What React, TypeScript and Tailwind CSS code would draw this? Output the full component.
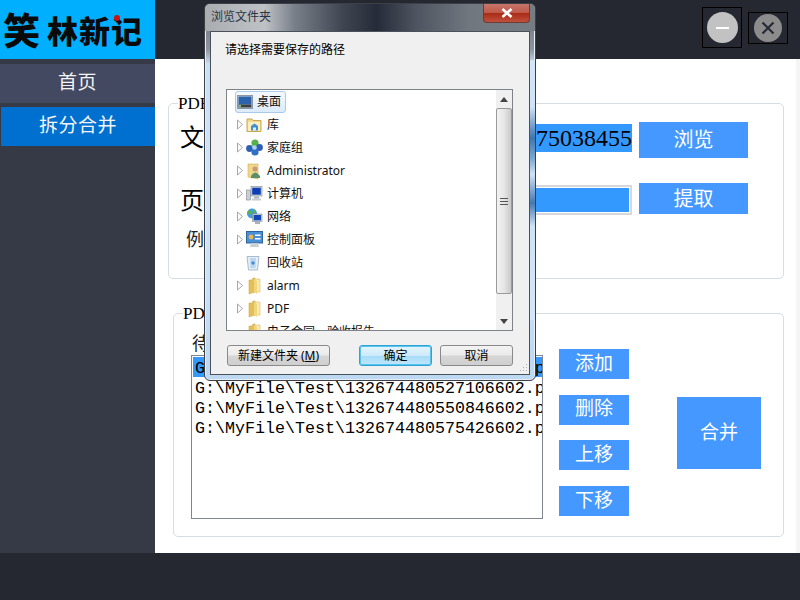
import React from "react";

const SERIF = "font-['Liberation_Serif','Noto_Sans_CJK_SC',serif]";
const UI = "font-['Noto_Sans','Noto_Sans_CJK_SC',sans-serif]";

function Tri() {
  return (
    <svg width="8" height="11" viewBox="0 0 8 11" className="shrink-0">
      <path d="M1.5 1 L6.5 5.5 L1.5 10 Z" fill="#fff" stroke="#a6a6a6" />
    </svg>
  );
}

function Folder() {
  return (
    <svg width="16" height="18" viewBox="0 0 16 18">
      <path d="M3 3 H6 L7 1 H9 V15 L3 17 Z" fill="#e3bf58" stroke="#cfae55" strokeWidth="0.6" />
      <path d="M9 2 H14 V15 H9 Z" fill="#f9eab0" stroke="#d9bd6a" strokeWidth="0.6" />
      <path d="M8 2 L11 4 V17 L8 15 Z" fill="#f2d67c" />
    </svg>
  );
}

function Icon({ kind }: { kind: string }) {
  if (kind === "desk")
    return (
      <svg width="16" height="14" viewBox="0 0 16 14">
        <rect x="0.5" y="0.5" width="15" height="13" fill="#cfd6de" stroke="#8d97a3" />
        <rect x="1.5" y="1.5" width="13" height="8" fill="#2a62ad" />
        <rect x="1.5" y="9.5" width="13" height="3" fill="#3a3f46" />
        <rect x="2" y="10" width="2" height="2" fill="#7fc06a" />
      </svg>
    );
  if (kind === "lib")
    return (
      <svg width="17" height="16" viewBox="0 0 17 16">
        <path d="M1 2 H6 L7 3.5 H15 V14.5 H1 Z" fill="#f3d98c" stroke="#c9a953" />
        <path d="M2 5 H14 V14 H2 Z" fill="#fbeebc" />
        <path d="M5 9 L8.5 6.5 L12 9 V13.5 H5 Z" fill="#3f8fd2" />
        <rect x="7" y="10.5" width="3" height="3" fill="#dff0fb" />
      </svg>
    );
  if (kind === "home")
    return (
      <svg width="17" height="17" viewBox="0 0 17 17">
        <circle cx="9" cy="4" r="3.6" fill="#57b04a" />
        <circle cx="3.5" cy="9.5" r="3.4" fill="#2f5fb4" />
        <circle cx="13.5" cy="8.5" r="3.4" fill="#2f5fb4" />
        <circle cx="9" cy="13" r="3.6" fill="#2f6fc4" />
        <circle cx="8.5" cy="8.5" r="2.2" fill="#a9d4f0" />
      </svg>
    );
  if (kind === "user")
    return (
      <svg width="16" height="18" viewBox="0 0 16 18">
        <path d="M2 2 H12 V17 L2 15 Z" fill="#f0d88a" stroke="#cfae55" strokeWidth="0.6" />
        <circle cx="9" cy="7" r="2.5" fill="#c99a76" />
        <path d="M5 14 Q9 7 14 14 V16 H5 Z" fill="#5d8f68" />
      </svg>
    );
  if (kind === "pc")
    return (
      <svg width="17" height="16" viewBox="0 0 17 16">
        <rect x="0.5" y="4" width="4" height="10" fill="#c9cfd6" stroke="#7d8791" strokeWidth="0.6" />
        <rect x="5" y="0.5" width="11" height="9.5" fill="#d5dae0" stroke="#7d8791" strokeWidth="0.6" />
        <rect x="6.2" y="1.7" width="8.6" height="7" fill="#0f3fb5" />
        <rect x="8" y="10.5" width="5" height="2" fill="#aab2bb" />
        <rect x="6" y="12.5" width="9" height="2" fill="#c5cbd2" />
      </svg>
    );
  if (kind === "net")
    return (
      <svg width="17" height="17" viewBox="0 0 17 17">
        <circle cx="6" cy="5.5" r="5" fill="#3f9fd8" />
        <path d="M3 2 Q6 3 5 6 Q2 7 1.5 4 Z M7 1 L10 3 L8 6 Z" fill="#5db04c" />
        <rect x="6.5" y="6" width="9.5" height="7.5" fill="#d5dae0" stroke="#7d8791" strokeWidth="0.6" />
        <rect x="7.6" y="7" width="7.4" height="5.4" fill="#1247b8" />
        <rect x="9" y="14" width="5" height="2" fill="#aab2bb" />
      </svg>
    );
  if (kind === "ctl")
    return (
      <svg width="17" height="17" viewBox="0 0 17 17">
        <rect x="0.5" y="0.5" width="16" height="11.5" fill="#4b8fd6" stroke="#2f659f" />
        <circle cx="5" cy="6" r="2.4" fill="#f1b64a" />
        <rect x="9" y="3.5" width="5.5" height="1.5" fill="#fff" />
        <rect x="9" y="7" width="5.5" height="1.5" fill="#fff" />
        <path d="M5 12 H12 L13 16 H4 Z" fill="#c9cfd6" />
      </svg>
    );
  if (kind === "bin")
    return (
      <svg width="14" height="16" viewBox="0 0 14 16">
        <path d="M1 1.5 H13 L11.5 15 H2.5 Z" fill="#e4eef7" stroke="#a9bccd" />
        <path d="M4 3 H10 L9.5 13 H4.5 Z" fill="#bcd6ee" />
        <circle cx="7" cy="8" r="1.8" fill="#4b8fd6" />
      </svg>
    );
  return <Folder />;
}

const rows: [string, string, boolean][] = [
  ["lib", "库", true],
  ["home", "家庭组", true],
  ["user", "Administrator", true],
  ["pc", "计算机", true],
  ["net", "网络", true],
  ["ctl", "控制面板", true],
  ["bin", "回收站", false],
  ["folder", "alarm", true],
  ["folder", "PDF", true],
  ["folder", "电子合同、验收报告", false],
];

function TreeRow({ kind, label, tri }: { kind: string; label: string; tri: boolean }) {
  return (
    <div className="flex h-[23px] shrink-0 items-center pl-[9px]">
      <div className="w-[10px] shrink-0">{tri && <Tri />}</div>
      <div className="flex w-[21px] shrink-0 justify-start">
        <Icon kind={kind} />
      </div>
      <span className="whitespace-nowrap text-[12px] text-[#111]">{label}</span>
    </div>
  );
}

function DlgBtn({ label, w, primary }: { label: React.ReactNode; w: string; primary?: boolean }) {
  return (
    <div
      className={`flex h-[21px] items-center justify-center rounded-[3px] border text-[12px] text-black ${w} ${
        primary
          ? "border-[#2ba4d8] bg-[linear-gradient(180deg,#e6f5fd_0%,#cdeafb_50%,#a9dcf8_55%,#bfe6fb_100%)] shadow-[inset_0_0_0_1px_#58c4ee]"
          : "border-[#8a8a8a] bg-[linear-gradient(180deg,#f3f3f3_0%,#ebebeb_48%,#d6d6d6_52%,#cfcfcf_100%)]"
      }`}
    >
      {label}
    </div>
  );
}

function Dialog() {
  return (
    <div
      className={`${UI} absolute left-[204px] top-[3px] flex h-[378px] w-[332px] flex-col overflow-hidden rounded-[6px] border border-[#3c4046] bg-[linear-gradient(180deg,#6c727c_0%,#8d949e_12%,#c9dff4_16%,#d3e6f8_55%,#bcd8f3_100%)] shadow-[inset_0_0_0_1px_#e8eef4]`}
    >
      <div className="flex h-[27px] shrink-0 items-start justify-between bg-[linear-gradient(90deg,#a9adb1_0%,#bfc2c5_18%,#7a808a_27%,#3f4550_42%,#252b38_52%,#4e5560_64%,#71777f_80%,#767c84_100%)] pl-[6px] pr-[5px]">
        <span className="pt-[5px] text-[12px] leading-[16px] text-[#2c3340]">浏览文件夹</span>
        <div className="flex h-[19px] w-[47px] items-center justify-center rounded-b-[4px] border border-t-0 border-[#6d3a36] bg-[linear-gradient(180deg,#c9746a_0%,#bf5a4b_48%,#a92c16_52%,#c0503c_100%)]">
          <svg width="14" height="10" viewBox="0 0 14 10">
            <path d="M2.5 1 L11.5 9 M11.5 1 L2.5 9" stroke="#fff" strokeWidth="2.6" />
          </svg>
        </div>
      </div>
      <div className="relative mx-[5px] mb-[5px] flex flex-1 flex-col border border-[#4b5159] bg-[#f0f0f0] pl-[15px] pr-[16px]">
        <div className="-ml-[1px] h-[57px] shrink-0 pt-[9px] text-[12px] leading-[18px] text-black">请选择需要保存的路径</div>
        <div className="flex h-[242px] shrink-0 border border-[#7f8388] bg-white">
          <div className="flex flex-1 flex-col overflow-hidden">
            <div className="flex h-[23px] shrink-0 items-center pl-[8px] pt-[1px]">
              <div className="flex h-[22px] w-[51px] items-center gap-[4px] rounded-[3px] border border-[#a9c9ee] bg-[linear-gradient(180deg,#f4f9fe_0%,#dcebfb_100%)] pl-[1px]">
                <Icon kind="desk" />
                <span className="text-[12px] text-[#111]">桌面</span>
              </div>
            </div>
            {rows.map((r) => (
              <TreeRow key={r[1]} kind={r[0]} label={r[1]} tri={r[2]} />
            ))}
          </div>
          <div className="flex w-[16px] shrink-0 flex-col bg-[#f0f0f0]">
            <div className="flex h-[18px] shrink-0 items-center justify-center">
              <svg width="8" height="5" viewBox="0 0 8 5">
                <path d="M4 0 L8 5 H0 Z" fill="#444" />
              </svg>
            </div>
            <div className="flex h-[186px] shrink-0 items-center justify-center rounded-[2px] border border-[#9a9a9a] bg-[linear-gradient(90deg,#f2f2f2_0%,#e6e6e6_50%,#c9c9c9_100%)]">
              <svg width="8" height="7" viewBox="0 0 8 7">
                <path d="M0 .5 H8 M0 3.5 H8 M0 6.5 H8" stroke="#555" />
              </svg>
            </div>
            <div className="flex-1" />
            <div className="flex h-[18px] shrink-0 items-center justify-center">
              <svg width="8" height="5" viewBox="0 0 8 5">
                <path d="M4 5 L8 0 H0 Z" fill="#444" />
              </svg>
            </div>
          </div>
        </div>
        <div className="mt-[14px] flex">
          <div className="ml-[1px]">
            <DlgBtn
              label={
                <span>
                  新建文件夹 (<u>M</u>)
                </span>
              }
              w="w-[103px]"
            />
          </div>
          <div className="ml-[29px]">
            <DlgBtn label="确定" w="w-[73px]" primary />
          </div>
          <div className="ml-[8px]">
            <DlgBtn label="取消" w="w-[73px]" />
          </div>
        </div>
        <svg width="10" height="10" viewBox="0 0 10 10" className="absolute bottom-[1px] right-[1px]">
          <path d="M8 1h1v1H8zM5 4h1v1H5zM8 4h1v1H8zM2 7h1v1H2zM5 7h1v1H5zM8 7h1v1H8z" fill="#b0b0b0" />
        </svg>
      </div>
      <div className="absolute right-0 top-[56px] h-[260px] w-[5px] bg-[linear-gradient(180deg,#d3e6f8_0%,#cfe3f6_18%,#3f75ad_30%,#7ea9d4_38%,#cfe3f6_44%,#4478b0_55%,#cfe3f6_64%,#d3e6f8_100%)]" />
    </div>
  );
}

function Btn({ label, cls }: { label: string; cls: string }) {
  return (
    <div className={`flex shrink-0 items-center justify-center bg-[#4498ff] text-white ${cls}`}>{label}</div>
  );
}

const files = [
  "G:\\MyFile\\Test\\132674480503066602.pdf",
  "G:\\MyFile\\Test\\132674480527106602.pdf",
  "G:\\MyFile\\Test\\132674480550846602.pdf",
  "G:\\MyFile\\Test\\132674480575426602.pdf",
];

export default function App() {
  return (
    <div className={`${SERIF} relative flex h-[600px] w-[800px] flex-col overflow-hidden bg-[#252830]`}>
      <header className="flex h-[59px] shrink-0">
        <div className="relative flex w-[155px] items-center bg-[#00b0ff] pl-[3px] font-['Noto_Sans_CJK_SC',sans-serif] font-black text-[#0a0a0a]">
          <span className="text-[37px] leading-none">笑</span>
          <span className="ml-[7px] text-[31px] leading-none tracking-[1px]">林新记</span>
          <span className="absolute left-[114px] top-[15px] h-[6px] w-[6px] rounded-full bg-[#d01010]" />
        </div>
        <div className="flex flex-1 items-start justify-end pr-[12px]">
          <div className="mt-[7px] flex h-[41px] w-[40px] items-center justify-center border border-black">
            <div className="flex h-[31px] w-[31px] items-center justify-center rounded-full bg-[#c2c2c2]">
              <div className="h-[2px] w-[13px] bg-white" />
            </div>
          </div>
          <div className="ml-[6px] mt-[12px] flex h-[32px] w-[40px] items-center justify-center border border-black">
            <div className="flex h-[28px] w-[28px] items-center justify-center rounded-full bg-[#8c8c8c]">
              <svg width="14" height="14" viewBox="0 0 14 14">
                <path d="M1.5 1.5 L12.5 12.5 M12.5 1.5 L1.5 12.5" stroke="#262a35" strokeWidth="2.2" />
              </svg>
            </div>
          </div>
        </div>
      </header>

      <div className="flex h-[494px] shrink-0">
        <nav className="flex w-[155px] shrink-0 flex-col bg-[#363a46] pt-[5px]">
          <div className="flex h-[39px] items-center justify-center bg-[#434960] text-[19px] tracking-[0.5px] text-[#f4f4f4]">
            首页
          </div>
          <div className="ml-[1px] mt-[4px] flex h-[39px] items-center justify-center bg-[#0070d0] text-[19px] tracking-[0.5px] text-[#f4f4f4]">
            拆分合并
          </div>
        </nav>

        <main className="flex flex-1 border-r-[4px] border-[#f5f5f5] bg-white pt-[44px]">
          <div className="flex flex-col">
            <section className="relative ml-[13px] h-[176px] w-[616px] rounded-[5px] border border-[#d5dde5] pl-[11px] pt-[18px]">
              <span className="absolute left-[9px] top-[-10px] bg-white text-[17px] leading-[20px] text-black">PDF拆分</span>
              <div className="flex w-[568px]">
                <span className="mt-[1px] w-[50px] shrink-0 text-[24px] leading-[30px] text-black">文件</span>
                <div className="mt-[2px] flex h-[28px] w-[402px] items-center justify-end overflow-hidden whitespace-nowrap bg-[#3399ff] text-[24px] text-black">
                  G:\MyFile\Test\13267448475038455
                </div>
                <Btn label="浏览" cls="ml-[7px] h-[36px] w-[109px] text-[20px]" />
              </div>
              <div className="mt-[25px] flex w-[568px]">
                <span className="w-[50px] shrink-0 text-[24px] leading-[36px] text-black">页码</span>
                <div className="mt-[2px] h-[30px] w-[402px] border-2 border-[#d8d8d8] bg-[#3399ff] shadow-[inset_0_0_0_1px_#fff]" />
                <Btn label="提取" cls="ml-[7px] h-[31px] w-[109px] text-[20px]" />
              </div>
              <div className="ml-[6px] mt-[9px] text-[18px] leading-[24px] text-[#222]">例如：1-3</div>
            </section>

            <section className="relative ml-[18px] mt-[34px] flex h-[224px] w-[611px] rounded-[5px] border border-[#d5dde5] pl-[17px] pt-[20px]">
              <span className="absolute left-[9px] top-[-10px] bg-white text-[17px] leading-[20px] text-black">PDF合并</span>
              <div className="flex w-[352px] shrink-0 flex-col">
                <div className="h-[21px] pl-[1px] text-[18px] leading-[20px] text-[#222]">待合并文件</div>
                <div className="h-[164px] overflow-hidden border border-[#80858f] pl-[1px] pt-[1px] font-['Liberation_Mono',monospace] text-[16.67px] leading-[20px] text-black">
                  {files.map((f, i) => (
                    <div key={f} className={`h-[20px] whitespace-nowrap pl-[2px] pt-[2px] ${i === 0 ? "bg-[#3399ff]" : ""}`}>
                      {f}
                    </div>
                  ))}
                </div>
              </div>
              <div className="ml-[16px] mt-[15px] flex h-[167px] flex-col justify-between">
                <Btn label="添加" cls="h-[30px] w-[70px] text-[19px]" />
                <Btn label="删除" cls="h-[30px] w-[70px] text-[19px]" />
                <Btn label="上移" cls="h-[30px] w-[70px] text-[19px]" />
                <Btn label="下移" cls="h-[30px] w-[70px] text-[19px]" />
              </div>
              <Btn label="合并" cls="ml-[48px] mt-[63px] h-[72px] w-[84px] text-[19px]" />
            </section>
          </div>
        </main>
      </div>

      <footer className="flex-1 bg-[#252830]" />
      <Dialog />
    </div>
  );
}
